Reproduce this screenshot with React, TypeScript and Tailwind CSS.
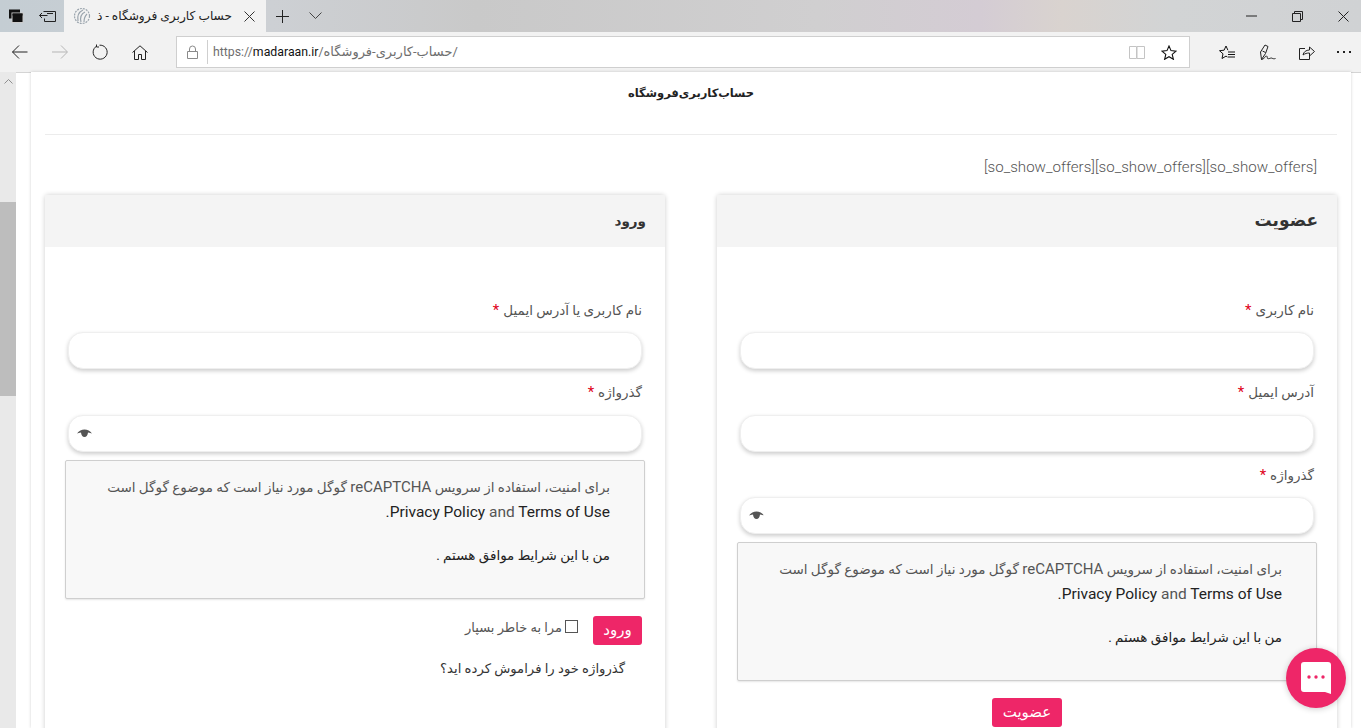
import React from 'react';

const fa = "font-['Roboto','DejaVu_Sans',sans-serif]";

function TabSetIcon() {
  return (
    <svg width="16" height="14" viewBox="0 0 16 14">
      <rect x="1" y="0.5" width="11" height="9" fill="#111" />
      <rect x="4" y="4" width="11" height="9.5" fill="#111" stroke="#ccc" strokeWidth="1" />
      <rect x="4.5" y="4.5" width="10" height="2" fill="#111" />
    </svg>
  );
}

function SetAsideIcon() {
  return (
    <svg width="18" height="14" viewBox="0 0 18 14" fill="none" stroke="#222" strokeWidth="1">
      <path d="M4.5 2.500h12v10h-11v-3" />
      <path d="M0.500 6.500h8M3 4l-2.500 2.500L3 9" />
      <path d="M8 4.500h6" />
    </svg>
  );
}

function Favicon() {
  return (
    <svg width="18" height="18" viewBox="0 0 18 18" fill="none" stroke="#9aa4ad" strokeWidth="1.200">
      <circle cx="9" cy="9" r="7.500" strokeDasharray="2 1" />
      <path d="M5 14c-1-5 1-9 5-11M8 15c-1-4 0-8 4-10M11 15c0-3 1-6 3-8" />
    </svg>
  );
}

function ToolBtn({ children, w = 'w-[40px]' }: { children: React.ReactNode; w?: string }) {
  return <div className={`${w} h-full flex items-center justify-center shrink-0`}>{children}</div>;
}

function BrowserChrome() {
  return (
    <div className="shrink-0">
      {/* tabs row */}
      <div className="h-[32px] flex bg-[linear-gradient(90deg,#c4cdd3_0%,#cdd0d4_20%,#c9c9c9_35%,#d0cfd0_60%,#d4ccd4_72%,#d9d3cf_78%,#d2d4d5_86%,#d0d2d4_100%)]">
        <ToolBtn w="w-[32px]"><TabSetIcon /></ToolBtn>
        <ToolBtn w="w-[32px]"><SetAsideIcon /></ToolBtn>
        <div className="w-[202px] bg-[#f2f2f2] flex items-center pl-[9px] pr-[11px]">
          <Favicon />
          <div dir="rtl" className={`${fa} flex-1 overflow-hidden whitespace-nowrap text-[12.2px] text-[#222] text-right`}>
            حساب کاربری فروشگاه - ذ
          </div>
          <svg className="ml-[12px] shrink-0" width="11" height="11" viewBox="0 0 11 11" stroke="#333" strokeWidth="1"><path d="M0.500 0.500l10 10M10.500 0.500l-10 10" /></svg>
        </div>
        <ToolBtn w="w-[33px]">
          <svg width="13" height="13" viewBox="0 0 13 13" stroke="#222" strokeWidth="1"><path d="M6.500 0v13M0 6.500h13" /></svg>
        </ToolBtn>
        <ToolBtn w="w-[33px]">
          <svg width="13" height="8" viewBox="0 0 13 8" fill="none" stroke="#444" strokeWidth="1"><path d="M0.500 0.500l6 6 6-6" /></svg>
        </ToolBtn>
        <div className="flex-1" />
        <ToolBtn w="w-[46px]">
          <svg width="11" height="2" viewBox="0 0 11 2" stroke="#222" strokeWidth="1"><path d="M0 1h11" /></svg>
        </ToolBtn>
        <ToolBtn w="w-[46px]">
          <svg width="11" height="11" viewBox="0 0 11 11" fill="none" stroke="#222" strokeWidth="1"><path d="M0.500 2.500h8v8h-8zM2.500 2.500v-2h8v8h-2" /></svg>
        </ToolBtn>
        <div className="w-[41px] pl-[5px] flex items-center justify-center">
          <svg width="11" height="11" viewBox="0 0 11 11" stroke="#222" strokeWidth="1"><path d="M0.500 0.500l10 10M10.500 0.500l-10 10" /></svg>
        </div>
      </div>

      {/* address row */}
      <div className="h-[41px] -mb-px flex items-center bg-[#f2f2f2] border-b border-[#d4d4d4]">
        <ToolBtn>
          <svg width="16" height="14" viewBox="0 0 16 14" fill="none" stroke="#222" strokeWidth="1"><path d="M0.500 7h15M7 0.500L0.500 7 7 13.500" /></svg>
        </ToolBtn>
        <ToolBtn>
          <svg width="16" height="14" viewBox="0 0 16 14" fill="none" stroke="#b5b5b5" strokeWidth="1"><path d="M0 7h15M9 0.500L15.500 7 9 13.500" /></svg>
        </ToolBtn>
        <ToolBtn>
          <svg width="16" height="16" viewBox="0 0 16 16" fill="none" stroke="#222" strokeWidth="1"><path d="M4.500 2.200a7 7 0 1 0 3-1M4.500 0.500v2.500h2.500" /></svg>
        </ToolBtn>
        <ToolBtn>
          <svg width="16" height="15" viewBox="0 0 16 15" fill="none" stroke="#222" strokeWidth="1"><path d="M0.500 7.500L8 0.800l7.500 6.700M2.500 6v8.500h4v-5h3v5h4V6" /></svg>
        </ToolBtn>
        <div className="ml-[16px] w-[1014px] h-[32px] bg-white border border-[#cfcfcf] flex items-center shrink-0">
          <div className="w-[30px] flex justify-center">
            <svg width="11" height="14" viewBox="0 0 11 14" fill="none" stroke="#8a8a8a" strokeWidth="1"><path d="M0.500 6.500h10v7h-10zM2.500 6.500V4a3 3 0 0 1 6 0v2.500" /></svg>
          </div>
          <div className="w-px h-[24px] bg-[#cfcfcf]" />
          <div dir="ltr" className={`${fa} ml-[5px] flex-1 text-[13px] text-[#6e6e6e] whitespace-nowrap`}>
            <span className="text-[12.3px]">https://<span className="text-[#111]">madaraan.ir</span>/</span>حساب-کاربری-فروشگاه/
          </div>
          <svg className="mr-[3px]" width="16" height="15" viewBox="0 0 16 15" fill="none" stroke="#c4c4c4" strokeWidth="1"><path d="M0.500 1.500h7v12h-7zM8 1.500h7.500v12H8z" /></svg>
          <div className="w-[41px] flex justify-center">
            <svg width="16" height="15" viewBox="0 0 16 15" fill="none" stroke="#111" strokeWidth="1.100"><path d="M8 1l2 4.600 5 .5-3.800 3.300 1.200 4.900L8 11.700l-4.400 2.600 1.200-4.900L1 6.100l5-.5z" /></svg>
          </div>
        </div>
        <div className="ml-[17px] flex h-full">
          <ToolBtn>
            <svg width="17" height="15" viewBox="0 0 17 15" fill="none" stroke="#111" strokeWidth="1"><path d="M8.900 5.200L7 1 5.100 5.200 .5 5.700l3.500 3.100-1 4.700 4-2.400 1.500.9" /><path d="M9 7h7M9 9.500h7M9 12h7" /></svg>
          </ToolBtn>
          <ToolBtn>
            <svg width="17" height="17" viewBox="0 0 17 17" fill="none" stroke="#222" strokeWidth="1"><path d="M2.500 15.500L1.500 8 6 1l3 1.500L6.500 9.500z" /><path d="M3.500 7l3 1.500" /><path d="M2.500 15.500c3 0 3.500-4 5-3.500s0 3 2 2.700 2.500-1 3.500-.5 2 .8 3.500.3" /></svg>
          </ToolBtn>
          <ToolBtn>
            <svg width="16" height="15" viewBox="0 0 16 15" fill="none" stroke="#222" strokeWidth="1"><path d="M6 3.500H0.500v11h10V10" /><path d="M4 10c.5-3 3-5 6.500-5V2l5 4.500-5 4.500V8c-2.500 0-4.500.5-6.500 2z" /></svg>
          </ToolBtn>
          <ToolBtn w="w-[34px]">
            <div className="flex gap-[4px]">
              <span className="w-[2px] h-[2px] bg-[#222]" />
              <span className="w-[2px] h-[2px] bg-[#222]" />
              <span className="w-[2px] h-[2px] bg-[#222]" />
            </div>
          </ToolBtn>
        </div>
      </div>
    </div>
  );
}

function Field({ label, password, first }: { label: string; password?: boolean; first?: boolean }) {
  return (
    <div className={first ? 'mx-[3px]' : 'mx-[3px] mt-[12.5px]'}>
      <div className="h-[22px] mb-[11px] flex items-center text-[13.5px] text-[#555]">
        <span>{label}</span>
        <span className="text-[#e0001a] text-[15px] mr-[4px]">*</span>
      </div>
      <div className="h-[37px] rounded-[15px] bg-white border border-[#efefef] shadow-[0_2px_4px_rgba(0,0,0,0.2)] flex items-center justify-end pl-[8px]">
        {password && (
          <svg width="15" height="9" viewBox="0 0 15 9" fill="#555">
            <path d="M0 4.500C2 2 4.500 0.500 7.500 0.500S13 2 15 4.500C14 4 12.500 3.500 11 3.400 10.800 6 9.500 8 7.500 8S4.200 6 4 3.400C2.500 3.500 1 4 0 4.500z" />
          </svg>
        )}
      </div>
    </div>
  );
}

function RecaptchaNote() {
  return (
    <div className="mt-[8px] h-[139px] bg-[#f8f8f8] border border-[#cfcfcf] rounded-[2px] shadow-[0_1px_2px_rgba(0,0,0,0.1)] pt-[14px] pr-[34px] text-[13.5px] leading-[25px] text-[#555]">
      <p>برای امنیت، استفاده از سرویس <span className="text-[15px]">reCAPTCHA</span> گوگل مورد نیاز است که موضوع گوگل است</p>
      <p className="text-[15.5px]">
        <span className="text-[#222]">Privacy Policy</span> and <span className="text-[#222]">Terms of Use</span>
        <span className="text-[#222]">.</span>
      </p>
      <p className="mt-[18px] text-[#222]">من با این شرایط موافق هستم .</p>
    </div>
  );
}

function Card({ title, titleSize, children }: { title: string; titleSize: string; children: React.ReactNode }) {
  return (
    <div className="w-[620px] bg-white rounded-[3px] shadow-[0_0_5px_rgba(0,0,0,0.2)] pb-[60px]">
      <div className={`h-[52px] bg-[#f4f4f4] flex items-center px-[19px] font-bold text-[#333] ${titleSize}`}>{title}</div>
      <div className="px-[20px] pt-[52px]">{children}</div>
    </div>
  );
}

function PinkButton({ children, className }: { children: React.ReactNode; className: string }) {
  return (
    <button className={`${className} h-[29px] rounded-[3px] bg-[#ee2668] text-white text-[15px] flex items-center justify-center`}>
      {children}
    </button>
  );
}

export default function App() {
  return (
    <div className={`${fa} h-[728px] w-[1361px] overflow-hidden flex flex-col bg-white relative`}>
      <BrowserChrome />
      <div className="flex-1 flex min-h-0">
        {/* page scrollbar */}
        <div className="w-[16px] shrink-0 bg-[#e9e9e9] flex flex-col">
          <div className="h-[130px] pt-[7px] flex justify-center">
            <svg width="9" height="5" viewBox="0 0 9 5" fill="none" stroke="#8f8f8f" strokeWidth="1"><path d="M0.500 4.500l4-4 4 4" /></svg>
          </div>
          <div className="h-[194px] bg-[#bdbdbd]" />
        </div>

        <div className="ml-[15px] w-[1320px] shrink-0 px-[14px] bg-white shadow-[0_0_3px_rgba(0,0,0,0.18)]">
          <div className="h-[62px] border-b border-[#ececec] box-content flex justify-center">
            <h1 dir="rtl" className="mt-[9px] text-[11.5px] [word-spacing:-3px] font-bold text-[#222] h-[24px] leading-[24px]">حساب کاربری فروشگاه</h1>
          </div>
          <div dir="ltr" className="mt-[20px] pr-[20px] text-right text-[15.1px] font-light leading-[24px] text-[#555]">
            [so_show_offers][so_show_offers][so_show_offers]
          </div>

          <div dir="rtl" className="mt-[16px] flex justify-between">
            <Card title="عضویت" titleSize="text-[17px]">
              <Field first label="نام کاربری" />
              <Field label="آدرس ایمیل" />
              <Field password label="گذرواژه" />
              <RecaptchaNote />
              <div className="mt-[17px] flex justify-center">
                <PinkButton className="w-[70px]">عضویت</PinkButton>
              </div>
            </Card>

            <Card title="ورود" titleSize="text-[13.5px]">
              <Field first label="نام کاربری یا آدرس ایمیل" />
              <Field password label="گذرواژه" />
              <RecaptchaNote />
              <div className="mt-[17px] mx-[3px] flex items-start">
                <PinkButton className="w-[49px]">ورود</PinkButton>
                <span className="mr-[15px] mt-[4px] w-[13px] h-[13px] border border-[#555] bg-white" />
                <span className="mr-[3px] text-[13px] leading-[24px] text-[#555]">مرا به خاطر بسپار</span>
              </div>
              <div className="mt-[12px] mr-[20px] text-[13.2px] leading-[24px] text-[#333]">گذرواژه خود را فراموش کرده اید؟</div>
            </Card>
          </div>
        </div>
      </div>

      {/* chat widget */}
      <div className="absolute left-[1286px] top-[648px] w-[60px] h-[60px] rounded-full bg-[#ee2668] shadow-[0_1px_6px_rgba(0,0,0,0.2)] flex items-center justify-center">
        <svg width="30" height="32" viewBox="0 0 30 32">
          <path d="M3 0h24a3 3 0 0 1 3 3v29l-6-2H3a3 3 0 0 1-3-3V3a3 3 0 0 1 3-3z" fill="#fff" />
          <circle cx="8" cy="15" r="1.700" fill="#ee2668" />
          <circle cx="15" cy="15" r="1.700" fill="#ee2668" />
          <circle cx="22" cy="15" r="1.700" fill="#ee2668" />
        </svg>
      </div>
    </div>
  );
}
